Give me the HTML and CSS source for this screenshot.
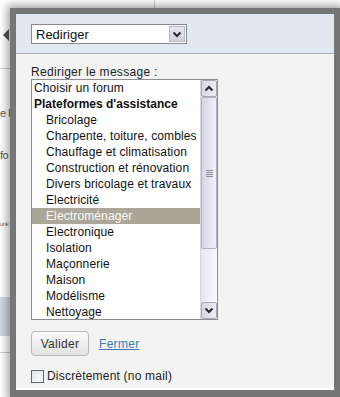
FILE: index.html
```html
<!DOCTYPE html>
<html>
<head>
<meta charset="utf-8">
<link rel="stylesheet" href="styles.css">
</head>
<body>
<div class="page">
  <div class="topline"></div>
  <div class="bg-col">
    <div class="bg-rule r1"></div>
    <div class="bg-text t1">e l</div>
    <div class="bg-text t2">fo</div>
    <div class="bg-text t3">unk</div>
    <div class="bg-band"></div>
    <div class="bg-rule r2"></div>
  </div>
</div>

<div class="arrow"></div>

<div class="dialog">
  <div class="dlg-head">
    <div class="select">
      <span class="select-text">Rediriger</span>
      <span class="select-btn">
        <svg width="10" height="7" viewBox="0 0 10 7"><path d="M1.5 1.5 L5 5 L8.5 1.5" fill="none" stroke="#2b2b2b" stroke-width="2"/></svg>
      </span>
    </div>
  </div>
  <div class="dlg-body">
    <div class="label">Rediriger le message :</div>
    <div class="listbox">
      <div class="options">
        <div class="opt">Choisir un forum</div>
        <div class="opt group">Plateformes d'assistance</div>
        <div class="opt sub">Bricolage</div>
        <div class="opt sub">Charpente, toiture, combles</div>
        <div class="opt sub">Chauffage et climatisation</div>
        <div class="opt sub">Construction et rénovation</div>
        <div class="opt sub">Divers bricolage et travaux</div>
        <div class="opt sub">Electricité</div>
        <div class="opt sub sel">Electroménager</div>
        <div class="opt sub">Electronique</div>
        <div class="opt sub">Isolation</div>
        <div class="opt sub">Maçonnerie</div>
        <div class="opt sub">Maison</div>
        <div class="opt sub">Modélisme</div>
        <div class="opt sub">Nettoyage</div>
      </div>
      <div class="scrollbar">
        <div class="sb-btn">
          <svg width="10" height="7" viewBox="0 0 10 7"><path d="M1.5 5.5 L5 2 L8.5 5.5" fill="none" stroke="#2b2b2b" stroke-width="2"/></svg>
        </div>
        <div class="sb-thumb">
          <div class="grip"></div>
        </div>
        <div class="sb-track"></div>
        <div class="sb-btn">
          <svg width="10" height="7" viewBox="0 0 10 7"><path d="M1.5 1.5 L5 5 L8.5 1.5" fill="none" stroke="#2b2b2b" stroke-width="2"/></svg>
        </div>
      </div>
    </div>
    <div class="actions">
      <button class="btn">Valider</button>
      <a class="link" href="#">Fermer</a>
    </div>
    <label class="check">
      <span class="box"></span>
      <span>Discrètement (no mail)</span>
    </label>
  </div>
</div>
</body>
</html>
```

FILE: styles.css
```css
html, body {
  margin: 0;
  padding: 0;
}
body {
  width: 340px;
  height: 397px;
  overflow: hidden;
  background: #ffffff;
  font-family: "Liberation Sans", Arial, sans-serif;
  font-size: 12px;
  color: #111;
  position: relative;
}

.page {
  height: 397px;
}
.topline {
  position: absolute;
  left: 154px;
  top: 0;
  width: 1px;
  height: 10px;
  background: #c8c8c8;
}
.bg-col {
  width: 10px;
  display: flex;
  flex-direction: column;
}
.bg-rule {
  height: 1px;
  background: #cfcfcf;
  flex: none;
}
.r1 { margin-top: 68px; }
.bg-text {
  white-space: nowrap;
  color: #555;
  font-size: 11px;
  line-height: 14px;
  letter-spacing: -0.5px;
}
.t1 { margin-top: 37px; }
.t2 { margin-top: 28px; }
.t3 { margin-top: 55px; font-size: 6px; color: #666; }
.bg-band {
  margin-top: 66px;
  height: 39px;
  background: #d3d8e2;
}
.r2 { margin-top: 16px; }

.arrow {
  position: absolute;
  left: 3px;
  top: 29px;
  width: 0;
  height: 0;
  border-top: 6px solid transparent;
  border-bottom: 6px solid transparent;
  border-right: 6px solid #555;
}

.dialog {
  position: absolute;
  left: 10px;
  top: 8px;
  width: 318px;
  height: 376px;
  border: 6px solid #767676;
  border-bottom-width: 7px;
  background: #f3f3f3;
  box-shadow: 0 0 8px 3px rgba(0, 0, 0, 0.35), inset -2px -3px 0 -1px #fdfdfd;
  display: flex;
  flex-direction: column;
}

.dlg-head {
  background: #e1e8f1;
  border-bottom: 1px solid #a7b2be;
  padding: 10px 0 0 15px;
  box-sizing: border-box;
  height: 40px;
}
.select {
  width: 156px;
  height: 20px;
  box-sizing: border-box;
  border: 1px solid #8a8a8a;
  background: #fff;
  display: flex;
  align-items: center;
  justify-content: space-between;
}
.select-text {
  font-size: 13px;
  padding-left: 4px;
  color: #111;
}
.select-btn {
  width: 16px;
  height: 16px;
  margin-right: 1px;
  background: linear-gradient(#e8e8ee, #cfd0da);
  border: 1px solid #b8b8c4;
  box-sizing: border-box;
  display: flex;
  align-items: center;
  justify-content: center;
}

.dlg-body {
  padding: 11px 0 0 15px;
  display: flex;
  flex-direction: column;
}
.label {
  font-size: 12px;
  line-height: 14px;
  color: #222;
  letter-spacing: 0.3px;
}
.listbox {
  width: 187px;
  height: 241px;
  box-sizing: border-box;
  border: 1px solid #8d8d8d;
  background: #fff;
  display: flex;
  overflow: hidden;
}
.options {
  flex: 1;
  overflow: hidden;
}
.opt {
  height: 16px;
  line-height: 16px;
  padding-left: 2px;
  font-size: 12px;
  white-space: nowrap;
  color: #111;
  letter-spacing: 0.12px;
}
.opt.group {
  font-weight: bold;
  letter-spacing: 0;
}
.opt.sub {
  padding-left: 14px;
}
.opt.sel {
  background: #aaa799;
  color: #fbfbf8;
}

.scrollbar {
  width: 17px;
  display: flex;
  flex-direction: column;
  background: linear-gradient(90deg, #e4e4ec, #fafafd);
  border-left: 1px solid #d8d8e0;
  box-sizing: border-box;
}
.sb-btn {
  height: 17px;
  flex: none;
  box-sizing: border-box;
  border: 1px solid #a8a8b8;
  border-radius: 2px;
  background: linear-gradient(90deg, #d7d7e3, #eeeef4);
  display: flex;
  align-items: center;
  justify-content: center;
}
.sb-thumb {
  height: 152px;
  flex: none;
  box-sizing: border-box;
  border: 1px solid #b2b2c6;
  border-radius: 2px;
  background: linear-gradient(90deg, #d6d6e6, #f0f0f7);
  display: flex;
  align-items: center;
  justify-content: center;
}
.grip {
  width: 7px;
  height: 7px;
  background: repeating-linear-gradient(#8c8c9c 0 1px, transparent 1px 2px);
}
.sb-track {
  flex: 1;
}

.actions {
  margin-top: 11px;
  display: flex;
  align-items: center;
  gap: 10px;
}
.btn {
  width: 58px;
  height: 25px;
  box-sizing: border-box;
  border: 1px solid #b9b9b9;
  border-radius: 4px;
  background: linear-gradient(#fafafa, #e2e2e2);
  font-family: "Liberation Sans", Arial, sans-serif;
  font-size: 12px;
  letter-spacing: 0.3px;
  color: #333;
  padding: 0;
}
.link {
  color: #3b78b4;
  text-decoration: underline;
  font-size: 12px;
  letter-spacing: 0.3px;
}

.check {
  margin-top: 13px;
  display: flex;
  align-items: center;
  gap: 3px;
  font-size: 12px;
  color: #222;
  letter-spacing: 0.2px;
}
.box {
  width: 13px;
  height: 13px;
  box-sizing: border-box;
  border: 1px solid #5b6875;
  background: linear-gradient(135deg, #e2e4e6, #fdfdfd);
}
```
